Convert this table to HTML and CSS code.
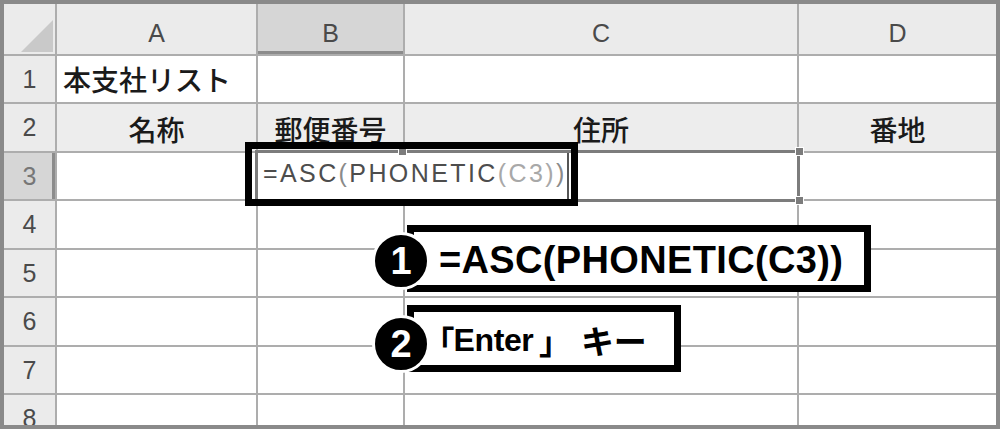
FILE: index.html
```html
<!DOCTYPE html>
<html lang="ja">
<head>
    <meta charset="UTF-8">
    <title>本支社リスト</title>
    <link rel="stylesheet" href="styles.css">
</head>
<body>
    <div class="sheet">
        <div class="grid">
            <div class="corner"><span class="tri"></span></div>
            <div class="colhead">A</div>
            <div class="colhead sel">B</div>
            <div class="colhead">C</div>
            <div class="colhead">D</div>

            <div class="rowhead">1</div>
            <div class="cell title">本支社リスト</div>
            <div class="cell"></div>
            <div class="cell"></div>
            <div class="cell"></div>

            <div class="rowhead">2</div>
            <div class="cell label">名称</div>
            <div class="cell label">郵便番号</div>
            <div class="cell label">住所</div>
            <div class="cell label">番地</div>

            <div class="rowhead sel">3</div>
            <div class="cell"></div>
            <div class="cell editing">
                <span class="formula"><span class="fn">=ASC</span><span class="p1">(</span><span class="fn">PHONETIC</span><span class="ref">(C3)</span><span class="p1">)</span></span>
                <span class="caret"></span>
                <span class="handle h-mid"></span>
                <span class="handle h-tr"></span>
                <span class="handle h-br"></span>
            </div>
            <div class="cell"></div>

            <div class="rowhead">4</div>
            <div class="cell"></div><div class="cell"></div><div class="cell"></div><div class="cell"></div>
            <div class="rowhead">5</div>
            <div class="cell"></div><div class="cell"></div><div class="cell"></div><div class="cell"></div>
            <div class="rowhead">6</div>
            <div class="cell"></div><div class="cell"></div><div class="cell"></div><div class="cell"></div>
            <div class="rowhead">7</div>
            <div class="cell"></div><div class="cell"></div><div class="cell"></div><div class="cell"></div>
            <div class="rowhead">8</div>
            <div class="cell"></div><div class="cell"></div><div class="cell"></div><div class="cell"></div>
        </div>

        <!-- annotations drawn over the sheet -->
        <div class="frame-box"></div>

        <div class="callout callout-1">
            <span class="num">1</span>
            <div class="note">=ASC(PHONETIC(C3))</div>
        </div>

        <div class="callout callout-2">
            <span class="num">2</span>
            <div class="note jp"><span class="open">「</span>Enter<span class="close">」</span><span class="key">キー</span></div>
        </div>
    </div>
</body>
</html>
```

FILE: styles.css
```css
body {
    margin: 0;
    background: #fff;
}

.sheet {
    position: relative;
    width: 1000px;
    height: 429px;
    box-sizing: border-box;
    border: 4px solid #8a8a8a;
    overflow: hidden;
    font-family: "Liberation Sans", "Noto Sans CJK JP", sans-serif;
}

.grid {
    display: grid;
    grid-template-columns: 51px 199px 145px 392px 197px;
    grid-template-rows: 50px 46px 47px 46px 47px 46px 47px 46px 46px;
    gap: 2px;
    background: #adadad;
}

.corner {
    background: #ebebeb;
    display: flex;
    align-items: flex-end;
    justify-content: flex-end;
    padding: 0 2px 2px 0;
}

.tri {
    width: 0;
    height: 0;
    border-left: 32px solid transparent;
    border-bottom: 32px solid #c9c9c9;
}

.colhead {
    background: #ebebeb;
    color: #4a4a4a;
    font-size: 25px;
    display: flex;
    align-items: center;
    justify-content: center;
    padding-top: 8px;
    box-sizing: border-box;
}

.colhead.sel {
    background: #d6d6d6;
    box-shadow: inset 0 -3px #8c8c8c;
}

.rowhead {
    background: #ebebeb;
    color: #4a4a4a;
    font-size: 25px;
    display: flex;
    align-items: center;
    justify-content: center;
}

.rowhead.sel {
    background: #d6d6d6;
    box-shadow: inset -3px 0 #8c8c8c;
    color: #777;
}

.cell {
    background: #fff;
    display: flex;
    align-items: center;
    font-family: "Noto Sans CJK JP", sans-serif;
    font-size: 28px;
    font-weight: 500;
    color: #1a1a1a;
}

.title {
    padding-left: 6px;
}

.label {
    background: #ededed;
    justify-content: center;
    padding-top: 3px;
    box-sizing: border-box;
}

.editing {
    grid-column: span 2;
    position: relative;
    z-index: 1;
    outline: 3px solid #7c7c7c;
    align-items: flex-end;
    padding: 0 0 11px 5px;
    font-family: "Liberation Sans", sans-serif;
    font-size: 25px;
    font-weight: normal;
    letter-spacing: 2.4px;
}

.formula .fn {
    color: #4d4d4d;
}

.formula .p1 {
    color: #8a8a8a;
}

.formula .ref {
    color: #a8a8a8;
}

.caret {
    position: absolute;
    left: 309px;
    top: 0;
    width: 2px;
    height: 47px;
    background: #555;
}

.handle {
    position: absolute;
    width: 7px;
    height: 7px;
    background: #7c7c7c;
    border: 1px solid #fff;
}

.h-mid { left: 140px; top: -6px; }
.h-tr { right: -7px; top: -6px; }
.h-br { right: -7px; bottom: -6px; }

.frame-box {
    position: absolute;
    left: 241px;
    top: 138px;
    width: 333px;
    height: 64px;
    box-sizing: border-box;
    border: 7px solid #000;
    z-index: 2;
}

.callout {
    position: absolute;
    left: 368px;
    display: flex;
    align-items: flex-start;
    z-index: 3;
}

.callout-1 { top: 221px; }
.callout-2 { top: 301px; }

.num {
    position: relative;
    z-index: 1;
    width: 52px;
    height: 52px;
    margin-right: -23px;
    border-radius: 50%;
    border: 3px solid #fff;
    background: #000;
    color: #fff;
    font-weight: bold;
    font-size: 38px;
    display: flex;
    align-items: center;
    justify-content: center;
}

.callout-1 .num { margin-top: 7px; }
.callout-2 .num { margin-top: 10px; }

.note {
    box-sizing: border-box;
    height: 67px;
    border: 7px solid #000;
    background: #fff;
    color: #000;
    font-weight: bold;
    font-size: 38px;
    display: flex;
    align-items: center;
    padding: 3px 0 0 25px;
}

.callout-1 .note {
    width: 464px;
    letter-spacing: 0.35px;
}

.callout-2 .note {
    width: 274px;
    font-size: 32px;
    letter-spacing: -0.4px;
    padding-left: 24px;
}

.note .open,
.note .close {
    font-family: "Noto Sans CJK JP", sans-serif;
    font-feature-settings: "palt";
}

.note .close {
    margin-left: 6px;
}

.note .key {
    font-family: "Noto Sans CJK JP", sans-serif;
    font-size: 33px;
    margin-left: 26px;
}
```
